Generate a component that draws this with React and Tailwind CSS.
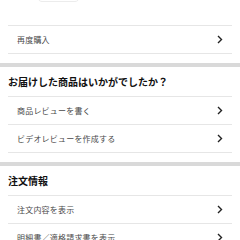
import React from 'react';

const Chevron = () => (
  <svg width="6" height="9" viewBox="0 0 6 9" className="shrink-0">
    <path d="M1 1 L4.5 4.5 L1 8" fill="none" stroke="#222" strokeWidth="1.4" />
  </svg>
);

const Row = ({ label }) => (
  <div className="h-[28px] flex items-center justify-between pl-[9px] pr-[9px] border-b border-[#e6e6e6]">
    <span className="text-[8px] leading-none text-[#4a4a4a] tracking-[0.2px]">{label}</span>
    <Chevron />
  </div>
);

const Section = ({ title, items }) => (
  <>
    <div className="h-[9px]" />
    <div className="h-[4px] bg-[#d9d9d9]" />
    <div className="bg-white">
      <div className="mx-2 h-[30px] flex items-center border-b border-[#e6e6e6]">
        <h2 className="text-[10px] leading-none font-bold text-[#111]">{title}</h2>
      </div>
      <div className="mx-2">
        {items.map(item => (
          <Row key={item} label={item} />
        ))}
      </div>
    </div>
  </>
);

export default function App() {
  return (
    <div
      className="w-[240px] h-[240px] overflow-hidden bg-white"
      style={{ fontFamily: '"Noto Sans CJK JP", "Noto Sans", sans-serif' }}
    >
      {/* bottom edge of the button above, mostly scrolled off */}
      <div className="h-[25px] pl-[37px] flex items-start overflow-hidden">
        <div className="w-[43px] h-[12px] -mt-[10px] rounded-[5px] border border-[#ececec]" />
      </div>
      <div className="mx-2 border-t border-[#e6e6e6]">
        <Row label="再度購入" />
      </div>

      <Section title="お届けした商品はいかがでしたか？" items={['商品レビューを書く', 'ビデオレビューを作成する']} />
      <Section title="注文情報" items={['注文内容を表示', '明細書／適格請求書を表示']} />
    </div>
  );
}
